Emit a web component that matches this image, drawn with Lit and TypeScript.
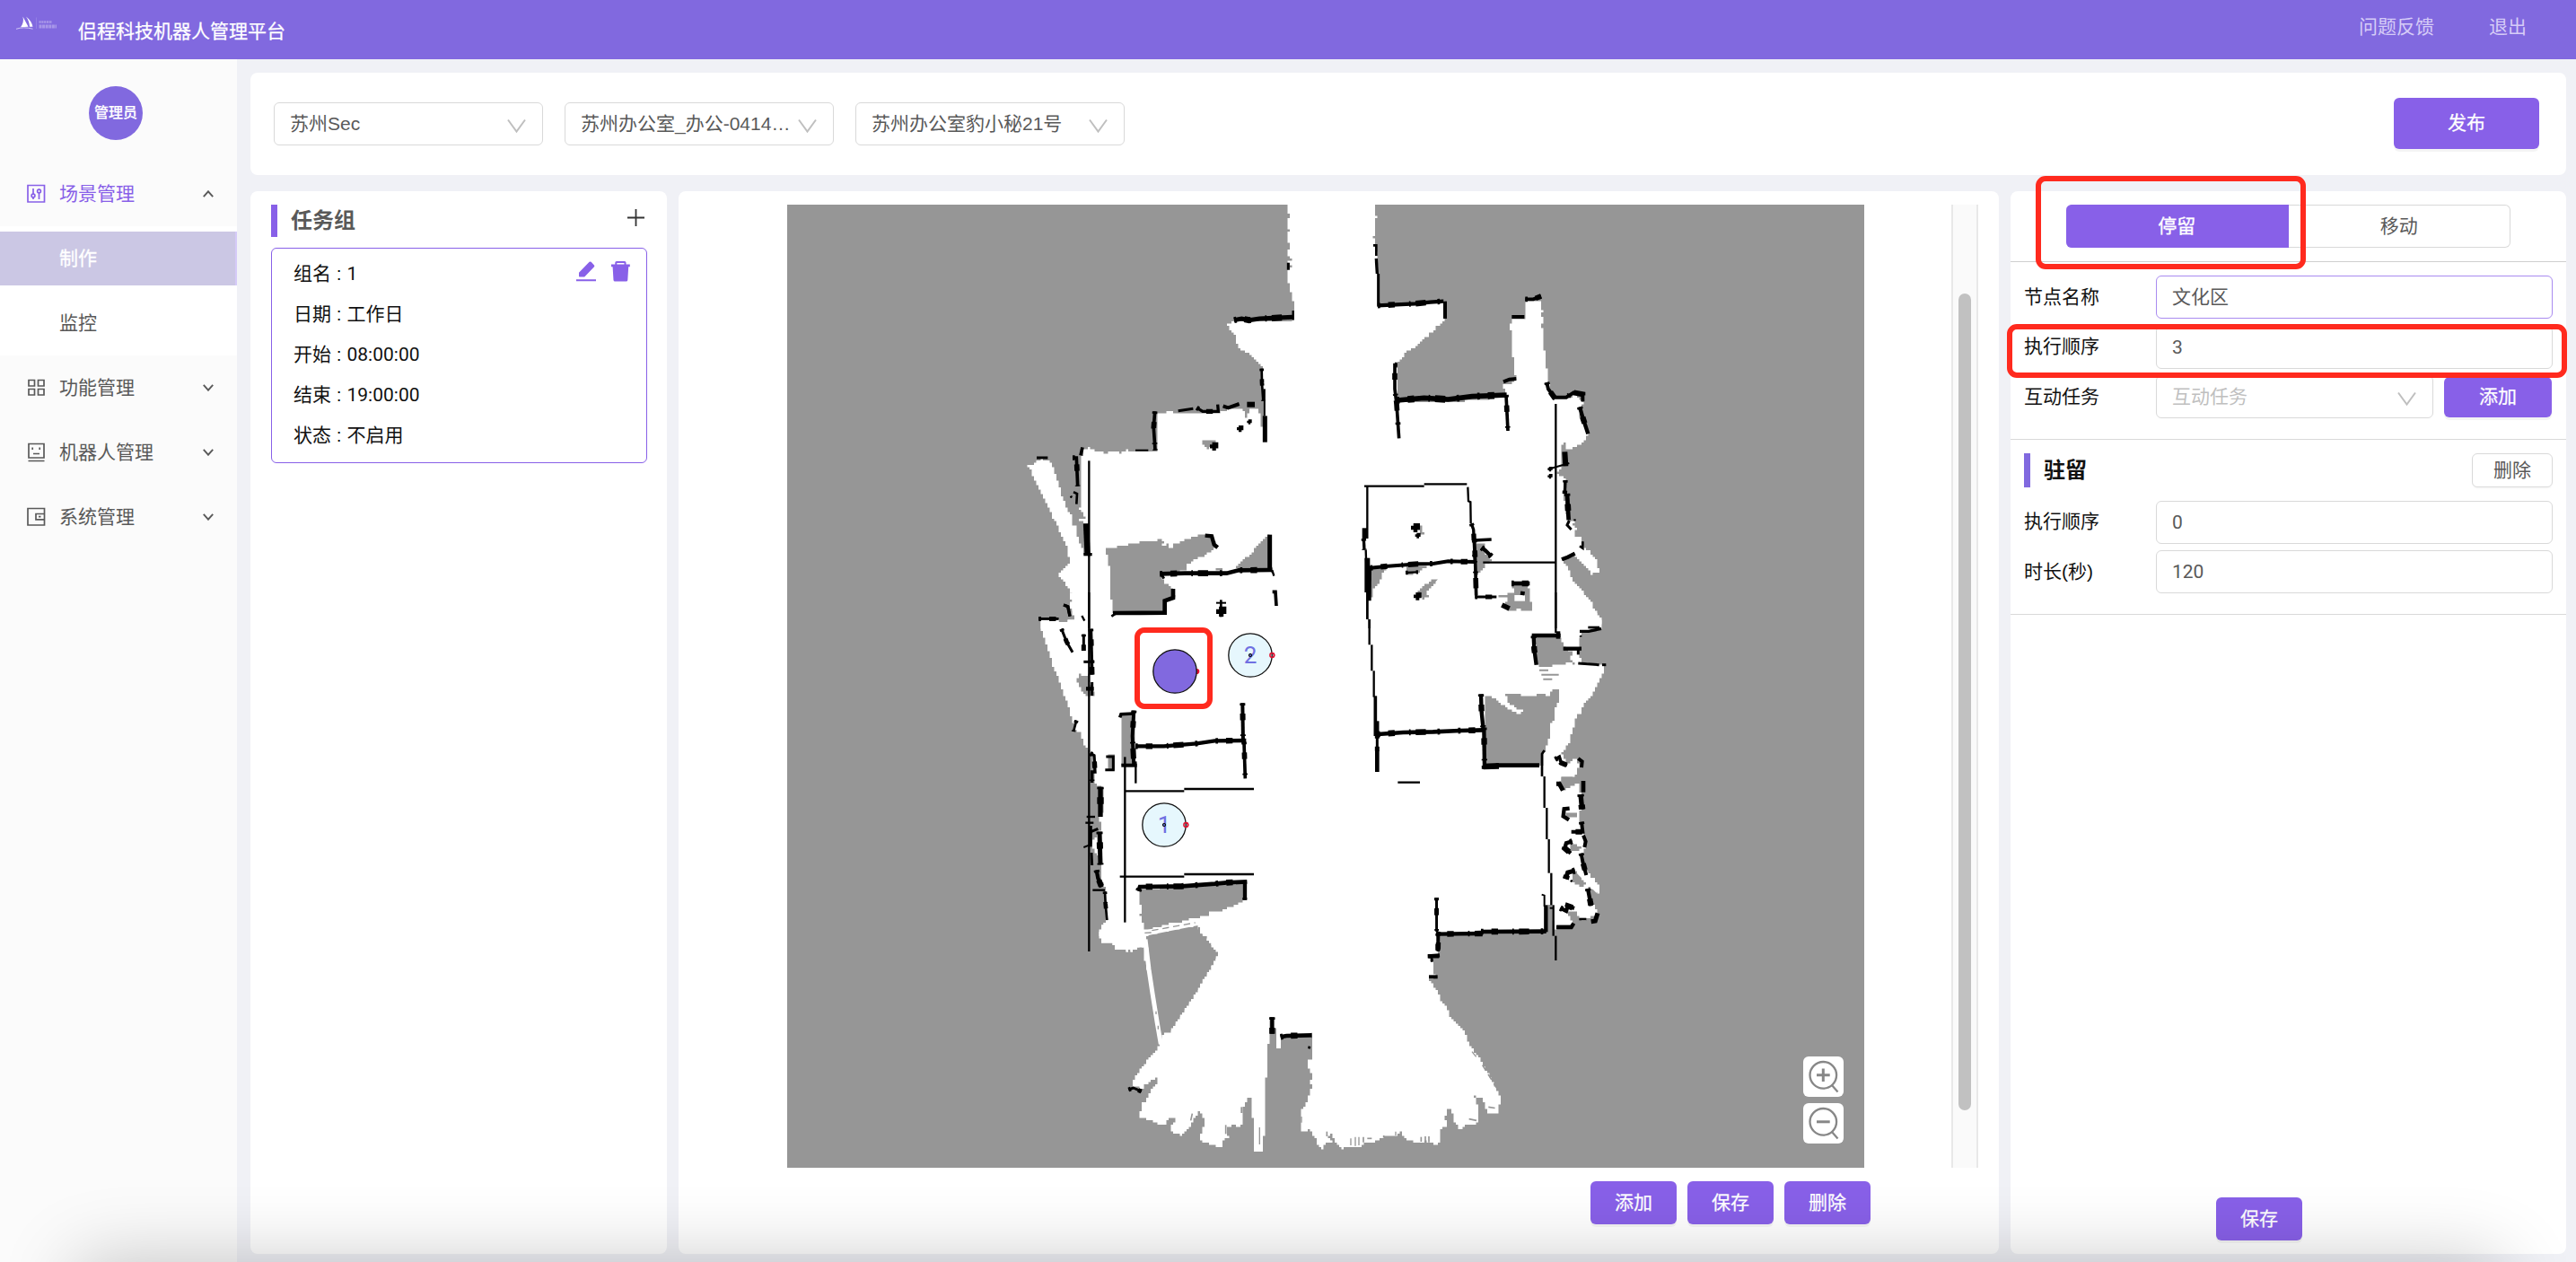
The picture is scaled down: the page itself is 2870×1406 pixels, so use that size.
import { LitElement, html, css, svg, nothing } from "lit";
import { customElement, property } from "lit/decorators.js";

const FONT = css`"Liberation Sans", "Noto Sans CJK SC", sans-serif`;
const DIGITS = css`Roboto, "Noto Sans CJK SC", sans-serif`;

/* ---------- occupancy map data ---------- */

// [points, stroke width, rough edge?]
type Wall = [string, number, boolean?];
interface Tile {
  x: number;
  y: number;
  free: string[];
  beams?: Wall[];
  unknown: string[];
  slits?: Wall[];
  walls: Wall[];
  dots: [number, number, number][];
}

// Every tile uses its own origin on the canvas; one map unit is a third of a pixel.
const TILES: Tile[] = [
  {
    x: 1120, y: 220,
    free: [
      "942,24 942,55 948,60 945,90 948,110 945,140 948,165 945,200 957,208 945,220 955,235 945,250 948,300 957,320 955,345 965,355 962,410 885,415 815,415 760,415 742,430 750,445 768,465 770,492 785,508 800,518 815,525 835,545 848,555 858,572 862,690 868,775 858,770 848,705 830,705 815,712 808,740 800,725 795,710 770,705 715,718 655,718 570,718 555,714 530,720 508,718 508,850 435,852 410,845 385,855 380,848 335,855 328,848 300,845 285,835 265,845 262,860 250,880 250,1020 255,1035 245,1045 268,1055 250,1062 272,1072 240,1080 275,1090 280,1200 262,1190 255,1160 245,1140 235,1100 220,1088 225,1060 213,1055 205,1035 195,1010 183,970 172,930 160,900 150,882 125,875 100,890 75,898 92,930 110,970 130,1010 150,1050 163,1085 180,1110 185,1130 195,1150 208,1180 215,1225 200,1238 180,1258 185,1280 210,1305 222,1330 218,1375 230,1390 228,1408 195,1422 175,1412 118,1415 118,1440 1200,1440 1200,24",
    ],
    unknown: [
      "337,1175 370,1166 420,1158 460,1150 520,1143 530,1150 525,1165 540,1158 545,1168 560,1168 562,1158 600,1145 640,1130 670,1128 695,1135 705,1175 690,1185 650,1205 605,1228 605,1248 520,1260 530,1290 545,1298 555,1310 565,1340 535,1350 530,1390 360,1390 355,1345 350,1265 345,1195 337,1188",
      "885,1128 770,1240 885,1245",
      "655,808 665,813 705,812 700,835 680,838 660,825",
      "705,1240 725,1240 725,1250 705,1250",
    ],
    walls: [
      ["765,410 790,405 815,410 850,405 960,400", 15, true],
      ["962,378 962,410", 7], ["857,572 858,620 862,680", 8, true], ["866,640 866,730", 7],
      ["868,730 868,818", 15], ["578,713 628,706", 9], ["640,703 660,715 712,715 710,692", 10, true],
      ["728,697 745,703 782,690", 12], ["808,692 834,692", 18], ["500,715 496,770 501,845", 11, true],
      ["435,845 478,845", 6], ["105,870 142,870", 9], ["258,835 252,862", 11],
      ["225,870 238,870 242,965", 11, true], ["228,985 240,990 238,1025", 8],
      ["280,880 280,1440", 7], ["270,1090 275,1196", 19], ["262,1193 290,1193", 10],
      ["668,1130 690,1132 698,1160 710,1170", 13], ["884,1127 884,1248", 15],
      ["517,1258 600,1256 740,1256 780,1246 892,1245", 14, true], ["892,1245 898,1265", 7],
      ["524,1262 530,1274", 9], ["561,1308 561,1338 533,1348 533,1388 360,1389", 14],
      ["355,1400 375,1387", 8], ["893,1318 903,1318 906,1365", 11], ["705,1355 738,1355", 6],
      ["721,1345 721,1402", 8], ["195,1362 210,1368 216,1400", 10],
      ["112,1408 178,1408", 8, true], ["256,1398 265,1415", 7], ["946,218 946,242", 9],
    ],
    dots: [[785, 773, 11], [816, 750, 8], [698, 832, 14], [220, 1001, 4], [722, 1384, 17]],
  },
  {
    x: 1480, y: 220,
    free: [
      "0,24 155,24 157,60 163,66 157,72 155,100 150,110 155,120 150,138 157,150 160,190 167,360 230,358 345,352 350,344 385,350 390,405 380,420 360,438 345,455 320,475 290,505 275,508 250,535 228,558 232,680 400,685 590,668 592,645 583,625 620,618 628,605 622,590 620,535 613,530 613,445 605,435 613,405 655,405 655,355 668,345 710,348 712,375 718,382 712,398 718,410 712,440 718,450 718,510 725,520 730,545 726,570 735,580 730,600 750,670 800,672 820,658 850,690 840,735 870,790 862,810 845,825 835,828 810,842 795,838 790,822 780,835 780,905 765,925 790,945 785,990 800,1080 830,1085 815,1100 830,1110 820,1130 845,1135 852,1175 868,1182 885,1205 905,1220 898,1230 908,1255 885,1258 860,1230 840,1212 825,1195 785,1215 800,1240 820,1290 850,1320 880,1360 890,1380 900,1395 912,1410 908,1440 0,1440",
    ],
    unknown: [
      "140,1240 195,1240 182,1262 165,1300 152,1315 140,1350",
      "258,1235 345,1228 300,1255 258,1265",
      "365,1280 355,1275 325,1295 300,1325 310,1345 335,1332 325,1322",
      "490,1155 530,1155 510,1175 530,1200 545,1215 520,1240 500,1262 490,1250",
      "615,1295 665,1295 675,1330 670,1348 680,1348 680,1380 658,1380 635,1375 628,1380 600,1378 590,1355 600,1340 565,1338 565,1330 600,1325 622,1318",
      "300,1092 312,1100 318,1125 305,1135", "595,670 597,700 585,690",
    ],
    slits: [["622,1339 657,1339", 20]],
    walls: [
      ["150,160 160,160 160,195", 8], ["160,204 163,255", 10], ["167,255 167,365", 9],
      ["165,361 290,355 340,350 385,347", 13, true], ["390,347 390,405", 12],
      ["230,560 222,560 222,640 228,690 236,805", 11, true],
      ["230,678 320,670 400,675 480,665 596,660", 17, true], ["594,660 600,780", 11, true],
      ["585,616 605,608 628,606", 12], ["613,399 655,399", 12], ["658,340 685,340 711,330", 11, true],
      ["730,618 735,640 755,668 795,668 820,652 850,658 850,682", 12, true],
      ["840,700 850,735 868,790", 13, true], ["790,850 793,898", 18], ["805,888 735,908", 6],
      ["760,690 760,1440", 7], ["792,945 790,990", 10, true], ["798,990 803,1078", 14, true],
      ["805,1080 798,1095 812,1110", 9], ["820,1078 827,1078", 6], ["780,1210 800,1202 824,1190", 13],
      ["850,1150 850,1172 840,1165", 8], ["120,965 320,965", 7], ["320,958 463,958", 7],
      ["466,968 468,1015 475,1018 476,1090", 7], ["478,1090 485,1110 490,1220", 10, true],
      ["130,965 130,1140", 7], ["122,1105 122,1140", 18], ["118,1140 120,1178", 10, true],
      ["125,1178 127,1235", 7], ["130,1205 130,1320", 18], ["138,1232 137,1348", 12],
      ["130,1320 130,1410", 7], ["137,1410 137,1440", 7],
      ["140,1238 200,1232 300,1225 350,1224 400,1216 490,1218", 12, true],
      ["258,1254 300,1252", 7, true], ["488,1146 545,1143", 10], ["488,1145 491,1220 494,1330", 11, true],
      ["490,1335 562,1335", 9, true], ["517,1220 760,1220", 7], ["512,1170 525,1180 545,1200", 13, true],
      ["612,1290 673,1290", 14, true], ["580,1362 605,1374", 17], ["642,1322 656,1324", 13],
      ["868,1437 906,1437", 8],
    ],
    dots: [[741, 908, 8], [741, 932, 8], [291, 1104, 15], [299, 1130, 9], [298, 1333, 13]],
  },
  {
    x: 1120, y: 660,
    free: [
      "218,0 222,60 230,90 195,102 175,92 118,95 118,120 128,150 135,175 147,200 155,240 170,270 180,300 195,345 205,370 215,400 225,440 235,465 250,470 262,510 280,530 290,560 298,600 300,640 312,650 325,660 325,740 310,755 322,780 315,800 300,830 282,850 302,870 320,900 320,960 335,1000 340,1095 328,1108 315,1140 320,1168 350,1175 365,1190 400,1192 405,1202 415,1190 420,1200 440,1190 455,1182 463,1200 470,1260 485,1260 478,1210 470,1150 480,1145 560,1125 645,1112 660,1145 690,1185 710,1205 705,1230 685,1260 1200,1260 1200,0",
    ],
    unknown: [
      "390,410 430,400 430,580 392,580",
      "248,272 262,282 280,270 290,320 298,350 285,350 265,338 250,320 240,295",
      "340,545 365,545 365,595 340,595",
      "445,990 600,985 800,970 800,1030 785,1038 750,1055 720,1068 685,1070 680,1080 640,1090 620,1092 600,1100 560,1105 520,1118 465,1130 458,1090 450,1080 455,1050 448,1020",
      "285,750 305,760 300,800 285,800",
    ],
    slits: [],
    walls: [
      ["195,42 208,46 216,80", 9], ["112,88 178,88", 8, true], ["188,122 205,165 225,200", 9, true],
      ["280,0 280,1200", 7], ["286,122 290,275", 11, true], ["262,140 262,195", 9, true],
      ["262,232 298,232", 9], ["270,322 296,322", 13], ["290,300 290,345", 9],
      ["238,428 228,465", 8, true], ["284,538 297,545 300,600 290,600 290,636", 10, true],
      ["318,650 318,750", 16, true], ["272,750 300,750", 7], ["268,770 295,770", 7],
      ["286,780 286,850", 9], ["286,800 310,790", 9], ["262,852 280,845", 6], ["315,800 318,910", 15, true], ["288,870 290,912", 9],
      ["305,928 310,955 322,985", 13, true], ["292,995 333,995", 7], ["333,1000 335,1040 340,1095", 8, true],
      ["337,549 361,549 361,593 334,593", 9], ["383,418 387,407 428,405", 11], ["430,395 425,480 430,580", 12, true],
      ["388,578 440,578", 12], ["436,565 436,638", 7], ["400,550 400,1103", 7],
      ["400,664 598,664", 7], ["598,657 831,657", 7], ["383,950 598,950", 7], ["598,942 831,942", 7],
      ["435,514 530,514 640,505 700,496 805,495", 13, true], ["793,370 795,500", 12, true],
      ["798,500 802,622", 11, true], ["445,998 450,984 590,982 700,974 740,970 808,967", 14, true],
      ["801,965 801,1028", 13],
    ],
    dots: [],
  },
  {
    x: 1480, y: 660,
    free: [
      "0,0 850,0 870,30 875,45 890,70 905,90 912,100 912,120 845,130 840,170 835,200 845,235 918,245 920,270 910,290 900,310 880,345 850,385 840,410 828,425 820,450 810,490 800,515 780,540 798,580 815,560 830,548 836,585 825,615 780,618 770,645 785,660 820,642 840,632 845,720 835,750 850,800 860,850 850,880 862,930 905,985 905,1005 885,990 862,980 880,1040 900,1075 860,1095 840,1090 820,1075 815,1110 765,1110 755,1148 750,1045 728,1050 728,1130 365,1140 365,1200 335,1215 350,1260 0,1260",
    ],
    unknown: [
      "690,145 760,145 775,160 785,175 790,190 815,200 810,225 820,238 800,236 795,242 750,243 745,252 720,248 700,245",
      "525,345 555,352 565,365 600,390 628,406 645,402 650,394 630,385 600,362 592,352 600,348 592,342 635,342 640,348 690,345 700,340 740,345 740,335 712,335 715,330 750,330 752,325 770,325 768,370 755,400 755,430 745,440 742,490 735,495 733,515 725,530 715,580 525,580 525,465 520,460",
      "780,620 822,620 800,640 785,655", "795,735 830,735 830,750 800,755", "805,835 850,858 810,865",
      "812,935 825,930 860,975 855,985 815,970", "800,1065 825,1070 842,1095 820,1108", "732,1050 750,1050 752,1125 732,1130",
    ],
    beams: [["835,935 900,1000", 12]],
    walls: [
      ["130,0 130,90", 7], ["137,90 137,175", 7], ["145,175 145,262", 7], ["152,262 152,350", 7],
      ["157,346 157,480", 11], ["165,430 165,480", 9], ["163,480 163,530", 9, true], ["163,528 163,600", 14],
      ["165,474 250,468 350,466 440,462 520,460", 14, true], ["510,340 512,400 518,460", 13, true],
      ["520,452 522,590", 13, true], ["518,582 570,580", 20], ["560,578 705,578", 14],
      ["232,635 306,635", 7], ["760,0 760,135", 7], ["680,144 776,144", 13], ["768,130 768,155", 14],
      ["686,145 688,190 695,242", 13, true], ["840,130 870,130 912,121", 10], ["785,188 846,188", 13],
      ["835,185 835,208", 9], ["835,237 905,242", 9], ["915,242 928,242", 9], ["722,528 714,540 714,615", 8],
      ["722,615 722,720", 7], ["730,720 730,825", 7], ["737,825 737,938", 7], ["745,938 745,1045", 7],
      ["752,1045 752,1148", 7], ["760,1148 760,1230", 7], ["758,558 772,550 778,570 798,578", 11, true],
      ["835,555 848,565 846,585", 12], ["762,640 772,640 784,662", 15], ["852,630 852,668", 14],
      ["843,675 848,725", 16, true], ["806,722 788,724 785,748 804,760", 13], ["846,767 850,800 812,800", 12, true],
      ["852,812 860,832 856,852", 12], ["815,832 795,838 790,855 810,872", 13, true],
      ["845,872 850,900 862,945", 12, true], ["824,930 800,936 793,958", 15, true],
      ["867,990 878,1048", 13, true], ["775,1055 795,1065 800,1048 822,1056", 13, true],
      ["878,1100 892,1098 900,1072", 15], ["838,1092 862,1092", 8], ["762,1119 812,1119 820,1106", 13],
      ["355,1024 368,1024", 7], ["361,1022 362,1130", 8, true], ["362,1142 515,1140", 13, true],
      ["510,1134 728,1133", 14, true], ["727,1045 727,1135", 13], ["713,1010 722,1013 722,1050", 6],
      ["740,1055 750,1055", 6], ["366,1140 366,1198", 10, true], ["332,1216 370,1216", 13], ["345,1216 345,1234", 8],
    ],
    slits: [],
    dots: [[812, 965, 4], [843, 147, 4]],
  },
  {
    x: 1220, y: 1000,
    free: [
      "35,0 40,80 28,95 13,120 20,150 50,152 65,160 65,172 90,175 100,168 105,182 112,168 120,182 135,168 150,162 165,165 163,130 155,80 150,0",
      "500,0 490,12 465,20 440,35 415,42 375,50 385,58 345,72 345,105 352,118 370,140 390,160 410,180 410,200 390,235 370,265 345,300 330,330 300,370 275,405 245,450 225,462 215,490 205,515 180,545 150,582 130,610 125,630 155,640 165,625 185,612 200,600 215,597 205,622 180,662 155,700 150,735 185,745 205,757 220,768 238,752 245,738 265,735 268,745 255,768 255,785 285,795 300,780 315,765 325,745 345,715 355,728 365,738 365,770 352,800 355,818 375,822 400,832 425,832 430,805 445,798 440,770 465,760 470,770 495,755 490,715 502,690 510,668 522,672 525,740 532,760 532,848 550,855 560,848 568,765 570,600 577,590 577,490 585,485 585,400 600,410 605,490 612,512 620,495 622,470 725,468 722,500 727,515 725,540 712,550 715,580 727,600 720,618 725,640 715,660 705,690 695,710 685,730 690,780 710,780 715,770 725,798 735,800 740,825 755,840 770,820 790,820 795,810 780,795 790,785 800,820 820,838 850,828 870,835 885,832 900,818 920,820 940,808 970,795 1000,800 1020,785 1025,800 1040,808 1060,818 1100,815 1120,818 1140,828 1155,815 1150,775 1175,760 1170,730 1180,700 1190,708 1200,750 1215,775 1240,758 1275,755 1280,740 1280,700 1268,662 1290,672 1300,690 1312,718 1345,718 1355,680 1352,655 1330,620 1318,590 1295,550 1280,530 1260,495 1248,490 1245,460 1220,430 1190,400 1178,370 1160,345 1140,300 1118,275 1135,258 1130,215 1115,195 1145,185 1145,120 1440,110 1440,0",
    ],
    beams: [["162,120 270,98 350,82", 19], ["168,140 180,240 192,320 208,420 220,490", 15]],
    unknown: [
      "345,92 352,118 370,140 345,140",
      "172,150 188,190 210,340 225,440 245,450 340,310 405,190 345,110 172,135",
    ],
    slits: [
      ["190,110 335,84", 4, true], ["166,118 188,117", 4], ["204,380 204,390", 4], ["211,428 211,440", 4], ["550,768 550,825", 4],
      ["490,700 490,720", 6], ["437,760 437,790", 5], ["775,782 775,798", 5], ["855,805 855,828", 4],
      ["870,800 870,830", 4], ["882,800 882,828", 4], ["897,800 897,818", 5], ["910,805 925,805", 5],
      ["965,795 965,803", 5], ["1090,800 1090,816", 5], ["1104,798 1104,816", 5], ["1116,798 1116,818", 5],
      ["1260,515 1280,540", 4, true], ["1295,560 1345,640", 5, true], ["1315,700 1345,705", 5, true],
      ["1250,740 1275,745", 5], ["325,722 320,745", 5], ["690,732 690,752", 4], ["1005,782 1005,795", 4],
    ],
    walls: [
      ["493,4 508,4", 8], ["592,400 592,455", 13, true], ["620,466 640,462 725,460", 14, true], ["712,500 720,502", 8],
      ["112,642 128,636 155,648", 9, true], ["1142,0 1142,115", 8, true], ["1148,115 1147,180", 10, true],
      ["1113,196 1152,193", 13], ["1126,205 1126,215", 8], ["1116,265 1145,265", 12],
    ],
    dots: [],
  },
];

const CELL = 7.5;
const ORIGIN = { x: 877, y: 228 };

/** Turns a polygon into the staircase outline it has on the map's cell grid. */
function cellOutline(points: string, tile: Tile): string {
  const dx = (tile.x - ORIGIN.x) * 3;
  const dy = (tile.y - ORIGIN.y) * 3;
  const snap = (v: number, d: number) => Math.round((v + d) / CELL) * CELL - d;
  const pts = points.split(" ").map(p => p.split(",").map(Number));
  let d = "";
  let cx = NaN;
  let cy = NaN;
  pts.forEach(([x0, y0], i) => {
    const [x1, y1] = pts[(i + 1) % pts.length];
    const n = Math.max(1, Math.ceil(Math.max(Math.abs(x1 - x0), Math.abs(y1 - y0)) / CELL));
    for (let k = 0; k < n; k++) {
      const x = snap(x0 + ((x1 - x0) * k) / n, dx);
      const y = snap(y0 + ((y1 - y0) * k) / n, dy);
      if (!d) d = `M${x} ${y}`;
      else {
        if (x !== cx) d += `H${x}`;
        if (y !== cy) d += `V${y}`;
      }
      cx = x;
      cy = y;
    }
  });
  return d + "Z";
}

@customElement("scene-map")
export class SceneMap extends LitElement {
  static styles = css`
    :host { display: block; width: 1200px; height: 1073px; }
    svg { display: block; }
    .free { fill: #fff; }
    .unknown { fill: #969696; }
    .wall, .beam, .slit { fill: none; stroke: #000; }
    .beam { stroke: #fff; }
    .slit { stroke: #969696; }
    .num { font: 26px ${DIGITS}; fill: #7070e2; text-anchor: middle; }
  `;

  private line([points, width, rough]: Wall, kind: string, fringe = true) {
    return svg`<polyline class=${kind} points=${points} stroke-width=${width}
        stroke-dasharray=${rough && !fringe ? "22 14" : nothing}></polyline>
      ${rough && fringe ? svg`<polyline class=${kind} points=${points} stroke-width=${width + 6}
        stroke-dasharray="8 27 22 48 5 17 34 39 8 61"></polyline>` : nothing}`;
  }

  private layer(draw: (t: Tile) => unknown) {
    return TILES.map(t => svg`<g transform="translate(${t.x} ${t.y}) scale(.33333)">${draw(t)}</g>`);
  }

  private blob(x: number, y: number, r: number) {
    const a = r * 0.45;
    return svg`<path d="M${x - r} ${y - a}H${x - a}V${y - r}H${x + r}V${y + a}H${x + a}V${y + r}H${x - a}V${y + a}H${x - r}Z"></path>`;
  }

  private node(x: number, y: number, label: string, active = false) {
    return svg`<g transform="translate(${x} ${y})">
      <circle cx="24.3" r="2.4" fill=${active ? "#e0103c" : "#b9c4d0"} stroke="#e5102f" stroke-width="1.3"></circle>
      <circle r="24.2" fill=${active ? "#8169df" : "#e6f7fd"} stroke="#111" stroke-width="1.3"></circle>
      ${active ? nothing : svg`
        <circle cx="24.3" r="2.4" fill="none" stroke="#e5102f" stroke-width="1.5"></circle>
        <text class="num" y="9">${label}</text>
        <circle r="1.7" fill="#4b5bb0" stroke="#111" stroke-width="1"></circle>`}
    </g>`;
  }

  render() {
    return html`<svg width="1200" height="1073" viewBox="877 228 1200 1073">
      <rect class="unknown" x="877" y="228" width="1200" height="1073"></rect>
      ${this.layer(t => t.free.map(p => svg`<path class="free" d=${cellOutline(p, t)}></path>`))}
      ${this.layer(t => t.unknown.map(p => svg`<path class="unknown" d=${cellOutline(p, t)}></path>`))}
      ${this.layer(t => (t.beams ?? []).map(w => this.line(w, "beam")))}
      ${this.layer(t => (t.slits ?? []).map(w => this.line(w, w[1] > 10 ? "beam" : "slit", false)))}
      <g transform="translate(1480 660) scale(.33333)">
        <path class="slit" stroke-width="6" d="M705 260H735M712 275H770M718 290H748"></path>
      </g>
      ${this.layer(t => [
        ...t.walls.map(w => this.line(w, "wall")),
        ...t.dots.map(([x, y, r]) => this.blob(x, y, r)),
      ])}
      ${this.node(1309, 748, "3", true)}
      ${this.node(1393, 730, "2")}
      ${this.node(1297, 919, "1")}
    </svg>`;
  }
}

/* ---------- form pieces ---------- */

@customElement("select-box")
export class SelectBox extends LitElement {
  @property() value = "";
  @property() placeholder = "";
  static styles = css`
    :host {
      display: flex; align-items: center; justify-content: space-between; box-sizing: border-box;
      height: 48px; padding: 0 17px; border: 1.5px solid #d9d9d9; border-radius: 6px;
      background: #fff; color: #595959; font: 21px/30px ${FONT};
    }
    .text { white-space: nowrap; padding-bottom: 1px; }
    .hint { color: #bfbfbf; }
    svg { margin: 5px 1px 0 0; flex: none; }
  `;
  render() {
    return html`
      <span class="text ${this.value ? "" : "hint"}">${this.value || this.placeholder}</span>
      <svg width="21" height="17" viewBox="0 0 21 17" fill="none" stroke="#bfbfbf" stroke-width="2">
        <path d="M1 1.5L10.5 14.5L20 1.5"></path>
      </svg>`;
  }
}

const ICONS: Record<string, unknown> = {
  scene: svg`<path d="M1 1.5H19.5V20H1Z"></path><path d="M7 5V11M7 15V17M13.5 5V5.5M13.5 10V17"></path>
    <circle cx="7" cy="13" r="1.9"></circle><circle cx="13.5" cy="8" r="1.9"></circle>`,
  grid: svg`<path d="M2 2.5H8.5V9H2ZM12.5 2.5H19V9H12.5ZM2 12.5H8.5V19H2ZM12.5 12.5H19V19H12.5Z"></path>`,
  robot: svg`<path d="M2 1.5H19V17H2ZM1.5 20.5H19.5M7 12.5H14M6.2 5.5V8M14.2 5.5V8"></path>`,
  wallet: svg`<path d="M19.5 7V1.5H1V20H19.5V14M19.5 7.5H10V13.8H19.5ZM13 10.7H15.5"></path>`,
};

const MENU = [
  { icon: "scene", label: "场景管理", open: true, children: ["制作", "监控"] },
  { icon: "grid", label: "功能管理" },
  { icon: "robot", label: "机器人管理" },
  { icon: "wallet", label: "系统管理" },
];

@customElement("side-menu")
export class SideMenu extends LitElement {
  static styles = css`
    :host { display: flex; flex-direction: column; width: 264px; flex: none; background: #fbfbfb; color: #595959; font: 21px/60px ${FONT}; }
    .avatar {
      width: 60px; height: 60px; margin: 30px 0 24px 99px; border-radius: 50%; background: #8169df;
      color: #fff; font-size: 16px; font-weight: 500; text-align: center; -webkit-text-stroke: .2px #fff;
    }
    .item { display: flex; align-items: center; height: 60px; margin: 6px 0; padding: 0 26px 0 30px; }
    .item .name { flex: 1; padding-left: 15px; }
    .open { color: #8860e8; }
    .sub { background: #fff; padding: 6px 0; display: flex; flex-direction: column; gap: 12px; }
    .leaf { height: 60px; padding-left: 66px; }
    .picked { background: #cbc7e4; color: #fff; border-right: 2px solid #d5caf8; -webkit-text-stroke: .3px #fff; }
    svg { flex: none; fill: none; stroke: currentColor; stroke-width: 1.7; }
    .arrow { color: #595959; stroke-width: 1.9; }
  `;
  render() {
    return html`
      <div class="avatar">管理员</div>
      ${MENU.map(m => html`
        <div class="item ${m.open ? "open" : ""}">
          <svg width="21" height="22" viewBox="0 0 21 22">${ICONS[m.icon]}</svg>
          <span class="name">${m.label}</span>
          <svg class="arrow" width="12" height="8" viewBox="0 0 12 8">
            <path d=${m.open ? "M.8 7.2L6 1.3L11.2 7.2" : "M.8 .8L6 6.7L11.2 .8"}></path>
          </svg>
        </div>
        ${m.children ? html`<div class="sub">
          ${m.children.map((c, i) => html`<div class="leaf ${i === 0 ? "picked" : ""}">${c}</div>`)}
        </div>` : nothing}`)}`;
  }
}

const TASK = [["组名", "1"], ["日期", "工作日"], ["开始", "08:00:00"], ["结束", "19:00:00"], ["状态", "不启用"]];

@customElement("app-root")
export class AppRoot extends LitElement {
  static styles = css`
    :host {
      display: flex; flex-direction: column; position: relative; width: 2870px; height: 1406px; overflow: hidden;
      background: #f0f1f6; color: #111; font: 21px/30px ${FONT};
    }
    * { box-sizing: border-box; }
    header { display: flex; height: 66px; flex: none; background: #8169df; color: #fff; padding: 0 55px 0 18px; }
    .logo { margin: 17px 24px 0 0; }
    .brand { padding-top: 20px; flex: 1; -webkit-text-stroke: .25px #fff; }
    .link { padding-top: 15px; margin-left: 61px; color: #d6ccf7; }
    .body { display: flex; flex: 1; min-height: 0; }
    main { flex: 1; display: flex; flex-direction: column; gap: 18px; padding: 15px 11px 9px 15px; min-width: 0; }
    .card { background: #fff; border-radius: 8px; }
    .filters { height: 114px; display: flex; align-items: center; gap: 24px; padding: 0 30px 0 26px; }
    .filters select-box { width: 300px; }
    button {
      height: 48px; width: 96px; border: 0; border-radius: 6px; background: #8860e8; color: #fff; padding: 0 0 1px;
      font: 21px/30px ${FONT}; box-shadow: 0 3px 0 rgba(0, 0, 0, .045); -webkit-text-stroke: .25px currentColor;
    }
    .publish { width: 162px; height: 57px; margin-left: auto; margin-bottom: 1px; }
    .columns { display: flex; flex: 1; gap: 13px; min-height: 0; }
    .groups { width: 464px; padding: 15px 22px 0 23px; }
    .heading { display: flex; align-items: center; font-size: 24px; font-weight: 700; height: 36px; }
    .heading::before { content: ""; width: 7px; height: 36px; background: #8860e8; margin-right: 15px; }
    .heading h2 { font: inherit; margin: 0; flex: 1; }
    .groups h2 { color: #595959; }
    .plus { margin: -7px 3px 0 0; }
    .task { display: flex; justify-content: space-between; margin-top: 12px; height: 240px; padding: 5px 18px 0 24px; border: 1.5px solid #8860e8; border-radius: 6px; }
    .task p { margin: 0; height: 45px; line-height: 45px; }
    .digits { font-family: ${DIGITS}; }
    .tools { display: flex; gap: 17px; padding-top: 9px; }
    .canvas { width: 1471px; position: relative; padding: 15px 23px 0 121px; display: flex; flex-wrap: wrap; align-content: flex-start; justify-content: space-between; }
    .track { width: 30px; height: 1073px; background: #fafafa; border: solid #e8e8e8; border-width: 0 2px; padding: 99px 6px 0; }
    .thumb { height: 910px; border-radius: 8px; background: #c1c1c1; }
    .actions { width: 100%; display: flex; gap: 12px; padding: 15px 0 0 895px; }
    .zoom { position: absolute; left: 1253px; top: 964px; display: flex; flex-direction: column; gap: 7px; }
    .zoom span { width: 45px; height: 45px; border-radius: 6px; background: #fff; }
    .zoom svg, .tools svg { display: block; }
    .props { width: 619px; display: flex; flex-direction: column; }
    .tabs { display: flex; height: 79px; padding: 15px 62px 0; border-bottom: 1.5px solid #cfcfcf; }
    .tab { flex: 1; height: 48px; line-height: 45px; text-align: center; color: #595959; border: 1.5px solid #d9d9d9; border-left: 0; border-radius: 0 6px 6px 0; }
    .tab.on { background: #8860e8; color: #fff; border-color: #8860e8; border-radius: 6px 0 0 6px; -webkit-text-stroke: .3px #fff; }
    .section { padding: 15px 15px 0; border-bottom: 1.5px solid #d9d9d9; display: flex; flex-direction: column; gap: 7.5px; }
    .basic { height: 198px; }
    .stay { height: 195px; padding-top: 15px; }
    .row { display: flex; align-items: center; height: 48px; }
    .row label { width: 147px; padding-bottom: 1px; }
    .input { flex: 1; height: 48px; line-height: 46px; padding-left: 17px; color: #595959; border: 1.5px solid #d9d9d9; border-radius: 6px; }
    .focus { border-color: #a98bf0; }
    .row select-box { width: 309px; }
    .row button { width: 120px; height: 45px; margin-left: 12px; }
    .stay .heading { height: 38px; margin-bottom: 7px; }
    .stay .heading::before { height: 38px; background: #8169df; }
    button.plain { width: 90px; height: 38px; background: #fff; border: 1.5px solid #d9d9d9; color: #595959; -webkit-text-stroke: 0; box-shadow: 0 2px 0 rgba(0, 0, 0, .02); }
    .save { margin: auto 0 15px 229px; }
    .mark { position: absolute; border: 6px solid #ff2a1e; border-radius: 11px; }
    .mark.tab-mark { left: 2268px; top: 196px; width: 301px; height: 104px; }
    .mark.order-mark { left: 2236px; top: 361px; width: 624px; height: 60px; }
    .mark.node-mark { left: 1264px; top: 699px; width: 87px; height: 91px; }
    .shade { position: absolute; left: 85px; right: 85px; top: 1406px; height: 200px; box-shadow: 0 0 84px rgba(0, 0, 0, .23); }
  `;

  private magnifier(plus: boolean) {
    return html`<span><svg width="45" height="45" viewBox="0 0 45 45" fill="none" stroke="#878787" stroke-width="2.3">
      <circle cx="22.3" cy="20.8" r="14.8"></circle>
      <path d="M31.5 31.5L38.5 39.5"></path>
      <path stroke-width="3" d=${plus ? "M15 20.8H29.7M22.3 13.5V28.1" : "M15 20.8H29.7"}></path>
    </svg></span>`;
  }

  private text(value: string) {
    return /^[\d:]+$/.test(value) ? html`<span class="digits">${value}</span>` : value;
  }

  private field(label: string, value: string, focus = false) {
    return html`<div class="row"><label>${label}</label><div class="input ${focus ? "focus" : ""}">${this.text(value)}</div></div>`;
  }

  render() {
    return html`
      <header>
        <svg class="logo" width="45" height="17" viewBox="0 0 45 17">
          <path fill="#fff" d="M7.5 1.5L13.5 12.8L5 13.2Q9 8 7.5 1.5ZM11 1.5Q17 6 18.5 12.8H15Q14.5 6 11 1.5Z"></path>
          <path fill="none" stroke="#cfc5f5" stroke-width="1" d="M0 15.3Q8 12.5 18.5 15.2"></path>
          <path stroke="#9684e4" stroke-width=".8" d="M22.5 2.5V15"></path>
          <path fill="none" stroke="#a897e9" stroke-width="2.5" stroke-dasharray="2.2 .6" d="M25.5 7.5H40"></path>
          <path fill="none" stroke="#a897e9" stroke-width="4" stroke-dasharray="3 .6" d="M25.5 12.5H45"></path>
        </svg>
        <span class="brand">侣程科技机器人管理平台</span>
        <span class="link">问题反馈</span><span class="link">退出</span>
      </header>
      <div class="body">
        <side-menu></side-menu>
        <main>
          <div class="card filters">
            <select-box value="苏州Sec"></select-box>
            <select-box value="苏州办公室_办公-0414…"></select-box>
            <select-box value="苏州办公室豹小秘21号"></select-box>
            <button class="publish">发布</button>
          </div>
          <div class="columns">
            <section class="card groups">
              <div class="heading"><h2>任务组</h2>
                <svg class="plus" width="19" height="19" viewBox="0 0 19 19" stroke="#333" stroke-width="1.8"><path d="M9.5 0V19M0 9.5H19"></path></svg>
              </div>
              <div class="task">
                <div>${TASK.map(([k, v]) => html`<p>${k} : ${this.text(v)}</p>`)}</div>
                <div class="tools">
                  <svg width="22" height="23" viewBox="0 0 22 23" fill="#8860e8"><path d="M0 20.3H22V22.3H0ZM3 16.8V12.8L14.6 .8Q15.6 0 16.6 .8L20 4.4Q20.7 5.3 20 6.2L9.2 17.4L3.8 17.6Q3 17.5 3 16.8Z"></path></svg>
                  <svg width="21" height="23" viewBox="0 0 21 23" fill="#8860e8"><path d="M0 3.6H4.3V1.6Q4.3 0 6 0H14.8Q16.5 0 16.5 1.6V3.6H20.8V6.2H19.2L18.3 21Q18.2 22.6 16.6 22.6H4.2Q2.6 22.6 2.5 21L1.6 6.2H0ZM6.3 2V3.6H14.5V2Z"></path></svg>
                </div>
              </div>
            </section>
            <section class="card canvas">
              <scene-map></scene-map>
              <div class="track"><div class="thumb"></div></div>
              <div class="actions"><button>添加</button><button>保存</button><button>删除</button></div>
              <div class="zoom">${this.magnifier(true)}${this.magnifier(false)}</div>
            </section>
            <section class="card props">
              <div class="tabs"><div class="tab on">停留</div><div class="tab">移动</div></div>
              <div class="section basic">
                ${this.field("节点名称", "文化区", true)}
                ${this.field("执行顺序", "3")}
                <div class="row"><label>互动任务</label><select-box placeholder="互动任务"></select-box><button>添加</button></div>
              </div>
              <div class="section stay">
                <div class="heading"><h2>驻留</h2><button class="plain">删除</button></div>
                ${this.field("执行顺序", "0")}
                ${this.field("时长(秒)", "120")}
              </div>
              <button class="save">保存</button>
            </section>
          </div>
        </main>
      </div>
      <div class="shade"></div>
      <div class="mark tab-mark"></div><div class="mark order-mark"></div><div class="mark node-mark"></div>`;
  }
}
